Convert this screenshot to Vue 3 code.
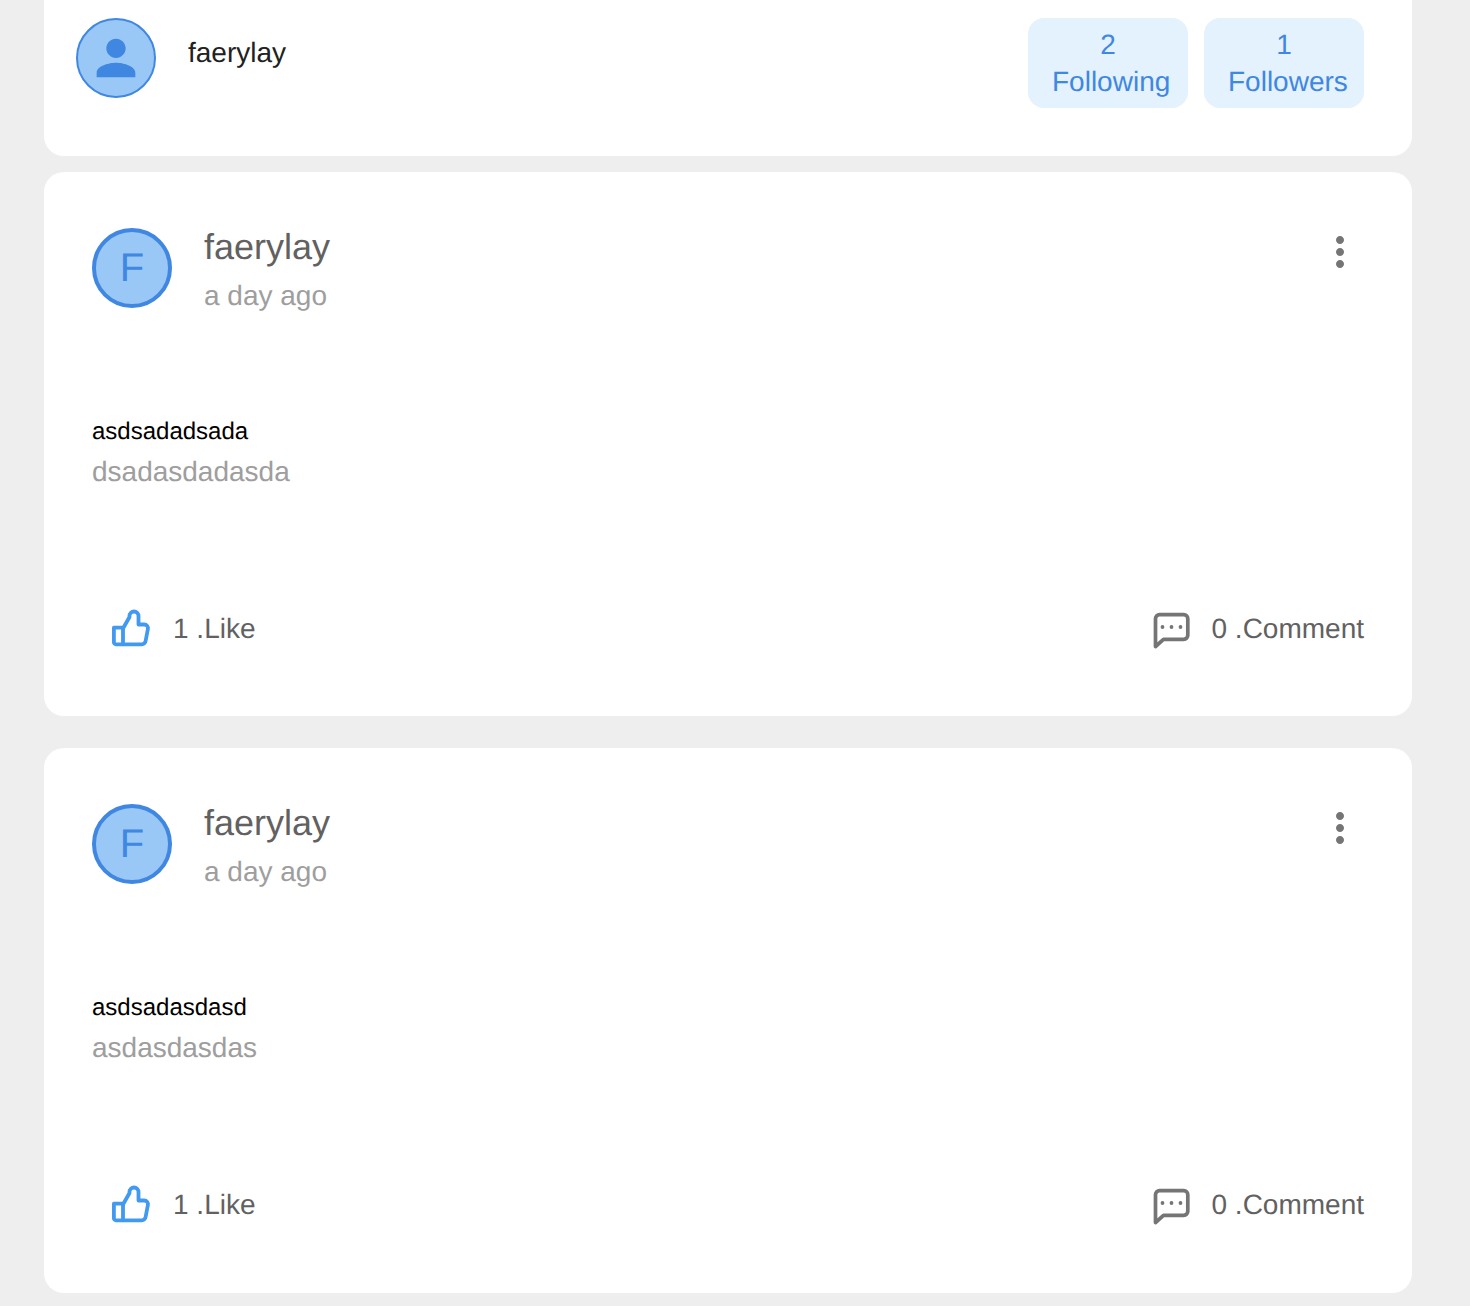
<template>
  <div class="page">
    <div class="profile-card">
      <div class="profile-left">
        <div class="profile-avatar">
          <svg viewBox="0 0 24 24" width="58" height="58">
            <path fill="#3f87e0" d="M12 12c2.21 0 4-1.79 4-4s-1.79-4-4-4-4 1.79-4 4 1.79 4 4 4zm0 2c-2.67 0-8 1.34-8 4v2h16v-2c0-2.66-5.33-4-8-4z" />
          </svg>
        </div>
        <div class="profile-name">faerylay</div>
      </div>
      <div class="profile-stats">
        <div class="stat">2<br />Following</div>
        <div class="stat">1<br />Followers</div>
      </div>
    </div>

    <div v-for="(post, index) in posts" :key="index" class="post">
      <div class="post-header">
        <div class="post-avatar">F</div>
        <div class="post-meta">
          <div class="post-author">faerylay</div>
          <div class="post-time">a day ago</div>
        </div>
        <svg viewBox="0 0 24 24" width="48" height="48">
          <path fill="#757575" d="M12 8c1.1 0 2-.9 2-2s-.9-2-2-2-2 .9-2 2 .9 2 2 2zm0 2c-1.1 0-2 .9-2 2s.9 2 2 2 2-.9 2-2-.9-2-2-2zm0 6c-1.1 0-2 .9-2 2s.9 2 2 2 2-.9 2-2-.9-2-2-2z" />
        </svg>
      </div>

      <div class="post-body">
        <div class="post-title">{{ post.title }}</div>
        <div class="post-text">{{ post.text }}</div>
      </div>

      <div class="post-footer">
        <div class="action like">
          <svg viewBox="0 0 40 40" width="40" height="40" fill="none" stroke="#4299f0" stroke-width="3.8" stroke-linejoin="round" stroke-linecap="round">
            <path d="M2.900 18.700H12V35.300H4.900a2 2 0 0 1-2-2z" />
            <path d="M12 19.500L18.500 8V7a4.500 4.500 0 0 1 9 0V15.500H33.300a3.700 3.700 0 0 1 3.600 4.500L34.600 32a4 4 0 0 1-3.900 3.300H12" />
          </svg>
          <span>1 .Like</span>
        </div>
        <div class="action">
          <svg viewBox="0 0 40 40" width="40" height="40" fill="none" stroke="#757575" stroke-width="3.7" stroke-linejoin="round" stroke-linecap="round">
            <path d="M7.500 5.700H31.800a4 4 0 0 1 4 4V26.300a4 4 0 0 1-4 4H11.500L3.500 37.500V9.700a4 4 0 0 1 4-4z" />
            <circle cx="10.500" cy="18" r="1.900" fill="#757575" stroke="none" />
            <circle cx="19.500" cy="18" r="1.900" fill="#757575" stroke="none" />
            <circle cx="28.500" cy="18" r="1.900" fill="#757575" stroke="none" />
          </svg>
          <span>0 .Comment</span>
        </div>
      </div>
    </div>
  </div>
</template>

<script setup>
import { ref } from 'vue';

const posts = ref([
  { title: 'asdsadadsada', text: 'dsadasdadasda' },
  { title: 'asdsadasdasd', text: 'asdasdasdas' },
]);
</script>

<style>
html,
body {
  background: #eeeeee;
}
</style>

<style scoped>
.page {
  padding: 0 58px 13px 44px;
  font-family: "Liberation Sans", Arial, sans-serif;
  font-size: 28px;
  text-rendering: geometricPrecision;
}

.profile-card {
  display: flex;
  justify-content: space-between;
  height: 156px;
  box-sizing: border-box;
  padding: 18px 48px 0 32px;
  background: #fff;
  border-radius: 0 0 20px 20px;
}

.profile-left {
  display: flex;
  gap: 32px;
}

.profile-avatar {
  display: flex;
  align-items: center;
  justify-content: center;
  width: 80px;
  height: 80px;
  box-sizing: border-box;
  border: 2px solid #3f87e0;
  border-radius: 50%;
  background: #9ac8f6;
}

.profile-name {
  margin-top: 19px;
  line-height: 32px;
  color: #212121;
}

.profile-stats {
  display: flex;
  gap: 16px;
}

.stat {
  width: 160px;
  height: 90px;
  box-sizing: border-box;
  padding: 8px 24px;
  line-height: 37px;
  text-align: center;
  white-space: nowrap;
  color: #3f87e0;
  background: #e3f2fd;
  border-radius: 16px;
}

.post {
  padding: 56px 48px 67.9px;
  background: #fff;
  border-radius: 20px;
  margin-top: 32px;
}

.profile-card + .post {
  margin-top: 16px;
}

.post-header {
  display: flex;
  gap: 32px;
  height: 80px;
}

.post-avatar {
  display: flex;
  align-items: center;
  justify-content: center;
  width: 80px;
  height: 80px;
  box-sizing: border-box;
  border: 4px solid #3f87e0;
  border-radius: 50%;
  background: #9ac8f6;
  color: #3f87e0;
  font-size: 40px;
}

.post-meta {
  flex: 1;
}

.post-author {
  font-size: 36px;
  line-height: 38px;
  color: #616161;
}

.post-time {
  margin-top: 10px;
  line-height: 40px;
  color: #9e9e9e;
}

.post-body {
  margin-top: 109.5px;
}

.post-title {
  font-size: 24px;
  line-height: 27.5px;
  color: #000;
}

.post-text {
  margin-top: 6px;
  line-height: 42px;
  color: #9e9e9e;
}

.post-footer {
  display: flex;
  justify-content: space-between;
  margin-top: 115.5px;
}

.action {
  display: flex;
  align-items: center;
  gap: 20px;
  height: 40px;
  color: #616161;
}

.like {
  padding-left: 19px;
  gap: 22px;
}
</style>
